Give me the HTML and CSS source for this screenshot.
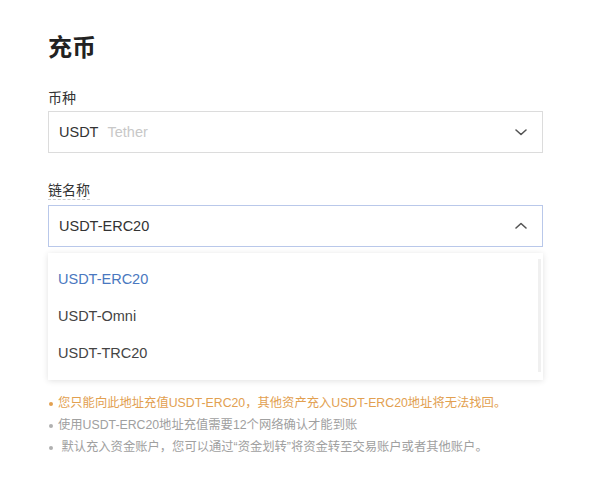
FILE: index.html
```html
<!DOCTYPE html>
<html lang="zh-CN">
<head>
  <meta charset="UTF-8" />
  <meta name="viewport" content="width=device-width, initial-scale=1.0" />
  <title>充币</title>
  <link rel="stylesheet" href="styles.css">
</head>
<body>
  <div class="page">
    <h1 class="title">充币</h1>

    <div class="field">
      <label class="label">币种</label>
      <div class="select">
        <span class="value">USDT</span>
        <span class="sub">Tether</span>
        <svg class="arrow" width="14" height="14" viewBox="0 0 14 14"><path d="M2 5 L7 9.5 L12 5" fill="none" stroke="#555" stroke-width="1.6" stroke-linecap="round" stroke-linejoin="round"/></svg>
      </div>
    </div>

    <div class="field chain">
      <label class="label dotted">链名称</label>
      <div class="select open">
        <span class="value">USDT-ERC20</span>
        <svg class="arrow" width="14" height="14" viewBox="0 0 14 14"><path d="M2 9 L7 4.5 L12 9" fill="none" stroke="#555" stroke-width="1.6" stroke-linecap="round" stroke-linejoin="round"/></svg>
      </div>
      <ul class="menu">
        <li class="active">USDT-ERC20</li>
        <li>USDT-Omni</li>
        <li>USDT-TRC20</li>
      </ul>
    </div>

    <ul class="notes">
      <li class="warn">您只能向此地址充值USDT-ERC20，其他资产充入USDT-ERC20地址将无法找回。</li>
      <li>使用USDT-ERC20地址充值需要12个网络确认才能到账</li>
      <li>&nbsp;默认充入资金账户，您可以通过“资金划转”将资金转至交易账户或者其他账户。</li>
    </ul>
  </div>
</body>
</html>
```

FILE: styles.css
```css
body {
  margin: 0;
  background: #fff;
  color: #333;
  font-family: "Liberation Sans", "Noto Sans CJK SC", sans-serif;
}

.page {
  width: 495px;
  padding: 30px 0 0 48px;
}

.title {
  margin: 0;
  font-size: 24px;
  line-height: 32px;
  font-weight: bold;
  color: #222;
  font-family: "Noto Sans CJK SC", sans-serif;
}

.field {
  margin-top: 25px;
}

.field.chain {
  margin-top: 26px;
}

.label {
  display: inline-block;
  font-size: 14px;
  line-height: 20px;
  color: #333;
  font-family: "Noto Sans CJK SC", sans-serif;
  margin-bottom: 4px;
}

.label.dotted {
  border-bottom: 1px dashed #c8c8c8;
  margin-bottom: 5px;
}

.select {
  display: flex;
  align-items: center;
  height: 42px;
  box-sizing: border-box;
  border: 1px solid #dcdcdc;
  padding: 0 14px 0 10px;
  font-size: 14.5px;
}

.select.open {
  border-color: #b9c8ea;
}

.value {
  color: #333;
}

.sub {
  margin-left: 9px;
  color: #c8c8c8;
}

.arrow {
  margin-left: auto;
}

.menu {
  position: relative;
  list-style: none;
  margin: 6px 0 0;
  padding: 8px 0;
  background: #fff;
  box-shadow: 0 1px 6px rgba(0, 0, 0, 0.12);
}

.menu::after {
  content: "";
  position: absolute;
  right: 2px;
  top: 6px;
  bottom: 8px;
  width: 3px;
  background: #f0f0f0;
}

.menu li {
  height: 37px;
  line-height: 37px;
  padding-left: 10px;
  font-size: 14.5px;
  color: #444;
}

.menu li.active {
  color: #4a78c0;
}

.notes {
  list-style: none;
  margin: 12px 0 0;
  padding: 0;
  font-size: 12.3px;
  line-height: 22px;
  color: #a0a0a0;
}

.notes li {
  position: relative;
  padding-left: 10px;
}

.notes li::before {
  content: "";
  position: absolute;
  left: 1px;
  top: 10px;
  width: 4px;
  height: 4px;
  border-radius: 50%;
  background: #b0b0b0;
}

.notes li.warn {
  color: #e2a050;
}

.notes li.warn::before {
  background: #e2a050;
}
```
